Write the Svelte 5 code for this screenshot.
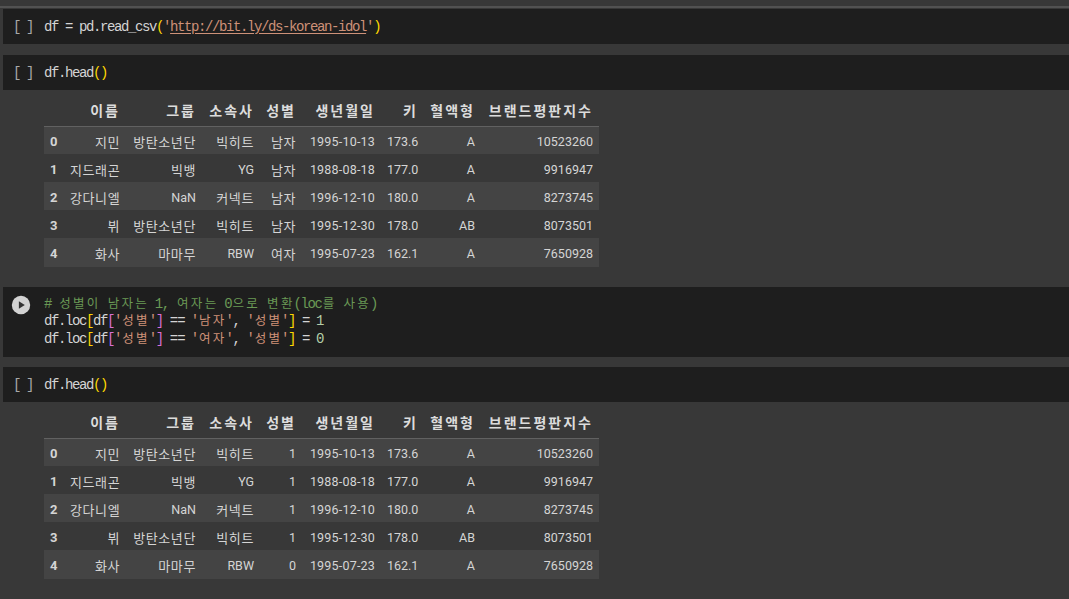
<script>
  const headers = ['', '이름', '그룹', '소속사', '성별', '생년월일', '키', '혈액형', '브랜드평판지수'];
  const base = [
    ['지민', '방탄소년단', '빅히트', '1995-10-13', '173.6', 'A', '10523260'],
    ['지드래곤', '빅뱅', 'YG', '1988-08-18', '177.0', 'A', '9916947'],
    ['강다니엘', 'NaN', '커넥트', '1996-12-10', '180.0', 'A', '8273745'],
    ['뷔', '방탄소년단', '빅히트', '1995-12-30', '178.0', 'AB', '8073501'],
    ['화사', '마마무', 'RBW', '1995-07-23', '162.1', 'A', '7650928']
  ];
  const makeRows = (g) => base.map((r, i) => [r[0], r[1], r[2], g[i], r[3], r[4], r[5], r[6]]);
  const tables = [makeRows(['남자', '남자', '남자', '남자', '여자']), makeRows(['1', '1', '1', '1', '0'])];
  const isKo = (s) => /[가-힣]/.test(s);
  const isDate = (s) => /^\d{4}-/.test(s);
</script>

{#snippet frame(rows)}
  <div class="output">
    <table>
      <colgroup>
        <col class="c0" /><col class="c1" /><col class="c2" /><col class="c3" /><col class="c4" /><col class="c5" /><col class="c6" /><col class="c7" /><col class="c8" />
      </colgroup>
      <thead>
        <tr>{#each headers as h}<th>{h}</th>{/each}</tr>
      </thead>
      <tbody>
        {#each rows as row, i}
          <tr>
            <th>{i}</th>
            {#each row as v}<td class:ko={isKo(v)} class:date={isDate(v)}>{v}</td>{/each}
          </tr>
        {/each}
      </tbody>
    </table>
  </div>
{/snippet}

{#snippet headCell(extra)}
  <div class="cell {extra}">
    <div class="gutter"><span class="br">[ ]</span></div>
    <pre class="code">df.head<span class="y">()</span></pre>
  </div>
{/snippet}

<main>
  <div class="topline"></div>

  <div class="cell first">
    <div class="gutter"><span class="br">[ ]</span></div>
    <pre class="code">df = pd.read_csv<span class="y">(</span><span class="s">'<u>http://bit.ly/ds-korean-idol</u>'</span><span class="y">)</span></pre>
  </div>

  {@render headCell('second')}
  {@render frame(tables[0])}

  <div class="cell run">
    <div class="gutter">
      <svg class="play" width="20" height="20" viewBox="0 0 20 20" aria-hidden="true">
        <circle cx="10" cy="10" r="9.2" fill="#d2d2d2" />
        <path d="M7.9 6.2 13.8 10l-5.9 3.8z" fill="#333" />
      </svg>
    </div>
    <pre class="code"><span class="c"># <span class="k">성별이</span> <span class="k">남자는</span> 1, <span class="k">여자는</span> 0<span class="k">으로</span> <span class="k">변환</span>(loc<span class="k">를</span> <span class="k">사용</span>)</span>
df.loc<span class="y">[</span>df<span class="m">[</span><span class="s">'<span class="k">성별</span>'</span><span class="m">]</span> <span class="eq">==</span> <span class="s">'<span class="k">남자</span>'</span>, <span class="s">'<span class="k">성별</span>'</span><span class="y">]</span> = <span class="n">1</span>
df.loc<span class="y">[</span>df<span class="m">[</span><span class="s">'<span class="k">성별</span>'</span><span class="m">]</span> <span class="eq">==</span> <span class="s">'<span class="k">여자</span>'</span>, <span class="s">'<span class="k">성별</span>'</span><span class="y">]</span> = <span class="n">0</span></pre>
  </div>

  {@render headCell('fourth')}
  {@render frame(tables[1])}
</main>

<style>
  :global(body) {
    margin: 0;
    background: #383838;
    overflow: hidden;
  }
  main {
    height: 599px;
    padding-top: 6px;
    box-sizing: border-box;
    overflow: hidden;
    background: #383838;
  }
  .topline {
    height: 2px;
    background: #525252;
    margin-bottom: 1px;
  }
  .cell {
    display: flex;
    height: 35px;
    margin-left: 3px;
    padding-top: 11px;
    box-sizing: border-box;
    background: #1e1e1e;
  }
  .second {
    margin-top: 11px;
  }
  .fourth {
    margin-top: 10px;
  }
  .run {
    height: 70px;
    padding-top: 9px;
  }
  .gutter {
    width: 41px;
    flex: none;
    position: relative;
  }
  .br {
    position: absolute;
    left: 10px;
    top: 0;
    font: 14px/15px "Liberation Mono", monospace;
    letter-spacing: -1.9px;
    color: #a9a9a9;
    white-space: pre;
  }
  .play {
    position: absolute;
    left: 8px;
    top: -1px;
  }
  .code {
    margin: 0;
    font: 14px/17.25px "Liberation Mono", "Noto Sans CJK KR", monospace;
    letter-spacing: -1.4px;
    color: #d4d4d4;
  }
  .cell:not(.run) .code {
    line-height: 15px;
  }
  .k {
    font-family: "Noto Sans CJK KR", sans-serif;
    font-size: 12.5px;
    letter-spacing: 2.3px;
    line-height: 1;
    margin-left: 1.2px;
    margin-right: -1.2px;
  }
  .eq { letter-spacing: -0.9px; margin-right: -1px; }
  .y { color: #ffd700; }
  .m { color: #da70d6; }
  .s { color: #ce9178; }
  .c { color: #6a9955; }
  .n { color: #b5cea8; }
  u { text-underline-offset: 2px; }

  .output {
    padding: 7px 0 0 44px;
    height: 197px;
    box-sizing: border-box;
  }
  table {
    border-collapse: collapse;
    table-layout: fixed;
    width: 555px;
    font-family: Roboto, "Noto Sans CJK KR", sans-serif;
    font-size: 12.5px;
    color: #d5d5d5;
  }
  .c0 { width: 20px; }
  .c1 { width: 62px; }
  .c2 { width: 76px; }
  .c3 { width: 58px; }
  .c4 { width: 42px; }
  .c5 { width: 79px; }
  .c6 { width: 43px; }
  .c7 { width: 57px; }
  .c8 { width: 118px; }
  th, td {
    padding: 2px 6px 0;
    text-align: right;
    white-space: nowrap;
    overflow: visible;
  }
  thead tr {
    height: 29px;
    border-bottom: 1px solid #616161;
  }
  thead th {
    padding: 0 6px 3px;
    font-size: 14px;
    font-weight: 700;
    letter-spacing: 2px;
    color: #dcdcdc;
  }
  tbody tr {
    height: 28px;
  }
  tbody tr:last-child {
    height: 29px;
  }
  tbody tr:nth-child(odd) {
    background: #444444;
  }
  tbody th {
    text-align: left;
    font-size: 13px;
    font-weight: 700;
  }
  td.ko {
    font-family: "Noto Sans CJK KR", sans-serif;
    font-size: 13px;
    letter-spacing: 0.6px;
  }
  td.date {
    letter-spacing: 0.2px;
  }
</style>
